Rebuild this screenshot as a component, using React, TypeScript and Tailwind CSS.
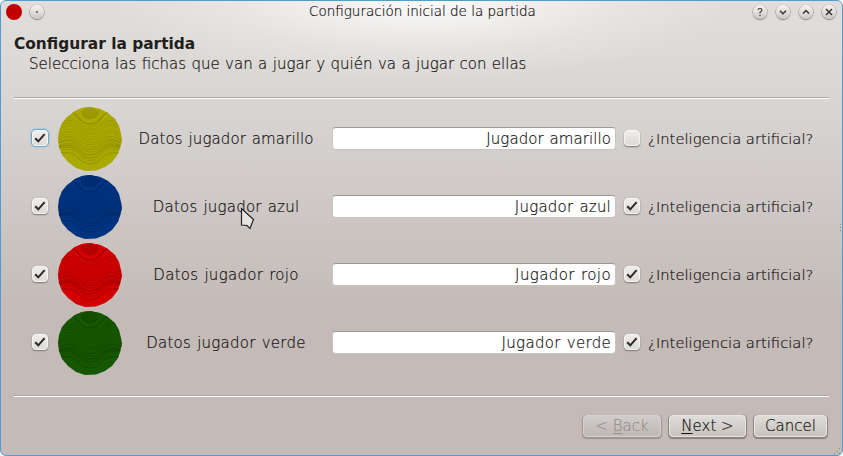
import type { ReactNode } from 'react';

type Player = {
  label: string;
  name: string;
  base: string;
  dark: string;
  ai: boolean;
  focused?: boolean;
  labelSpacing: string;
  nameSpacing: string;
};

const players: Player[] = [
  { label: 'Datos jugador amarillo', name: 'Jugador amarillo', base: '#aaa900', dark: '#858400', ai: false, focused: true, labelSpacing: 'tracking-[0.1px] [word-spacing:1px]', nameSpacing: 'tracking-[0.07px] [word-spacing:1px]' },
  { label: 'Datos jugador azul', name: 'Jugador azul', base: '#003480', dark: '#00245c', ai: true, labelSpacing: 'tracking-[0.22px] [word-spacing:1px]', nameSpacing: 'tracking-[0.22px] [word-spacing:1px]' },
  { label: 'Datos jugador rojo', name: 'Jugador rojo', base: '#d20000', dark: '#8c0000', ai: true, labelSpacing: 'tracking-[0.28px] [word-spacing:1px]', nameSpacing: 'tracking-[0.4px] [word-spacing:1px]' },
  { label: 'Datos jugador verde', name: 'Jugador verde', base: '#165800', dark: '#0e3e00', ai: true, labelSpacing: 'tracking-[0.26px] [word-spacing:1px]', nameSpacing: 'tracking-[0.3px] [word-spacing:1px]' },
];

// y: depth at the centre, rise: height of the side crests, edge: drop from the crest to the rim
const waves = [
  { y: 20, rise: 9, edge: 6, o: 0.3 }, { y: 22.5, rise: 9, edge: 6, o: 0.45 }, { y: 25, rise: 9, edge: 5, o: 0.3 },
  { y: 27.5, rise: 9, edge: 5, o: 0.4 }, { y: 30, rise: 8, edge: 5, o: 0.3 }, { y: 32.5, rise: 8, edge: 5, o: 0.4 },
  { y: 35, rise: 8, edge: 4, o: 0.35 }, { y: 37.5, rise: 8, edge: 4, o: 0.5 }, { y: 40, rise: 8, edge: 4, o: 0.4 },
  { y: 42.5, rise: 9, edge: 3, o: 0.65 }, { y: 45, rise: 9, edge: 3, o: 0.5 }, { y: 48, rise: 10, edge: 2, o: 0.9 },
  { y: 51, rise: 11, edge: 1, o: 0.75 }, { y: 53.5, rise: 11, edge: 0, o: 0.35 }, { y: 57, rise: 11, edge: 0, o: 0.65 },
];

function Ball({ base, dark, id }: { base: string; dark: string; id: string }) {
  return (
    <svg width="64" height="64" viewBox="0 0 64 64" className="block">
      <clipPath id={id}>
        <polygon points="32,0 42,2 50,6 57,12 61,19 63,27 64,33 62,41 60,47 54,55 47,60 38,63.5 27,64 18,61 10,55 4,48 1,40 0,32 1,24 4,16 9,10 17,4 24,1" />
      </clipPath>
      <g clipPath={`url(#${id})`}>
        <rect width="64" height="64" fill={base} />
        {waves.map(({ y, rise, edge, o }) => (
          <path
            key={y}
            d={`M-1 ${y - rise + edge} C3 ${y - rise + edge - 1} 6 ${y - rise} 11 ${y - rise} C19 ${y - rise} 22 ${y} 32 ${y} C42 ${y} 45 ${y - rise} 53 ${y - rise} C58 ${y - rise} 61 ${y - rise + edge - 1} 65 ${y - rise + edge}`}
            fill="none"
            stroke={dark}
            strokeOpacity={o}
            strokeWidth="1"
          />
        ))}
        <path d="M13 4 C21 8 22 17 32 17 C42 17 43 8 51 4 L51 0 L13 0Z" fill={base} />
        <path d="M14 5 C22 9 22 17 32 17 C42 17 42 9 50 5" fill="none" stroke={dark} strokeOpacity=".7" strokeWidth="1.3" />
        <ellipse cx="32" cy="6" rx="8" ry="5.5" fill={dark} fillOpacity=".4" />
        <path d="M23.5 3 C23 14.5 41 14.5 40.5 3" fill="none" stroke={dark} strokeOpacity=".5" />
      </g>
    </svg>
  );
}

function Check({ checked, focused }: { checked: boolean; focused?: boolean }) {
  return (
    <span
      className={`mb-[2px] block h-4 w-4 shrink-0 rounded-[4px] border border-[#f7f6f5] bg-linear-to-b from-[#efeeed] to-[#dddad7] ${
        focused ? 'shadow-[0_0_1.5px_1px_#4ba3d8]' : 'shadow-[0_1px_1.5px_0px_#77726f]'
      }`}
    >
      {checked && (
        <svg width="14" height="14" viewBox="0 0 14 14" className="block">
          <path d="M2.2 7.2 L5.3 10.3 L11.6 3.2" fill="none" stroke="#2b2927" strokeWidth="2" />
        </svg>
      )}
    </span>
  );
}

function TitleButton({ children }: { children: ReactNode }) {
  return (
    <span className="block h-[14px] w-[14px] rounded-full bg-linear-to-b from-[#f6f5f4] to-[#cbc7c3] shadow-[0_0.5px_1px_0.5px_#85817e]">
      <svg width="14" height="14" viewBox="0 0 14 14" className="block" fill="none" stroke="#353331" strokeWidth="1.5">
        {children}
      </svg>
    </span>
  );
}

function Separator() {
  return <div className="mx-[13px] h-[2px] shrink-0 border-t border-b border-t-[#aaa6a4] border-b-white" />;
}

function Button({ children, width, disabled }: { children: ReactNode; width: string; disabled?: boolean }) {
  return (
    <button
      className={`flex h-[22px] ${width} items-center justify-center rounded-[4px] border bg-linear-to-b whitespace-pre ${
        disabled
          ? 'border-[#d6d2cf] from-[#d1cdca] to-[#bfb8b4] text-[#96908d] shadow-[0_1px_1px_0.5px_#9c9592]'
          : 'border-[#e9e7e5] from-[#dfddda] to-[#c7c2bd] shadow-[0_1px_1px_0.5px_#88817e]'
      }`}
    >
      {children}
    </button>
  );
}

export default function App() {
  return (
    <div className="relative h-[456px] w-[843px] overflow-hidden bg-white font-['DejaVu_Sans_Light','DejaVu_Sans',sans-serif] text-[15px] font-extralight text-[#171412] [-webkit-text-stroke:0.2px]">
      <div className="flex h-[456px] flex-col rounded-[6px] border border-[#529bca] bg-[radial-gradient(ellipse_310px_80px_at_421px_0px,#ffffffe0,#ffffff90_30%,#ffffff38_65%,#ffffff00),linear-gradient(#e0dedc_0px,#d9d5d2_100px,#cdc8c5_210px,#c4bbb8_305px)]">
        <header className="flex h-[22px] shrink-0 items-center px-[5px] text-[13.5px]">
          <span className="h-4 w-4 rounded-full bg-[#c20000]" />
          <span className="mb-px ml-2">
            <TitleButton><circle cx="7" cy="7" r=".5" strokeWidth="1" /></TitleButton>
          </span>
          <h1 className="mb-[2px] ml-[265px] w-[240px] whitespace-nowrap">Configuración inicial de la partida</h1>
          <div className="mr-[1px] mb-px ml-auto flex gap-[9px]">
            <TitleButton><path strokeWidth="1.1" d="M5 5 Q5 3.5 7 3.5 Q9 3.5 9 5 Q9 6 7 7.2 V8.5 M7 9.7 V11" /></TitleButton>
            <TitleButton><path d="M4 5.8 L7 8.8 L10 5.8" /></TitleButton>
            <TitleButton><path d="M4 8.5 L7 5.5 L10 8.5" /></TitleButton>
            <TitleButton><path d="M4 4 L10 10 M10 4 L4 10" /></TitleButton>
          </div>
        </header>
        <div className="h-[74px] shrink-0 pt-[11px] pl-[13px] leading-5 whitespace-nowrap">
          <h2 className="font-['DejaVu_Sans',sans-serif] text-[15.4px] font-bold text-[#211e1c] [-webkit-text-stroke:0px]">Configurar la partida</h2>
          <p className="pl-[15px] [word-spacing:0.67px]">Selecciona las fichas que van a jugar y quién va a jugar con ellas</p>
        </div>
        <Separator />
        <main className="pt-[6px]">
          {players.map((p) => (
            <div key={p.name} className="flex h-[68px] items-center pl-[31px] leading-5 whitespace-nowrap">
              <Check checked focused={p.focused} />
              <div className="ml-[10px]"><Ball base={p.base} dark={p.dark} id={p.name.replace(' ', '-')} /></div>
              <div className={`mr-[2px] w-[208px] text-center ${p.labelSpacing}`}>{p.label}</div>
              <input
                className={`mb-px h-[23px] w-[284px] rounded-[4px] border border-[#c9c4c1] border-t-[#9b9794] bg-white px-1 pt-px text-right leading-5 ${p.nameSpacing}`}
                defaultValue={p.name}
              />
              <div className="ml-2"><Check checked={p.ai} /></div>
              <div className="ml-2 text-[14.75px]">¿Inteligencia artificial?</div>
            </div>
          ))}
        </main>
        <div className="h-[18px] shrink-0" />
        <Separator />
        <footer className="mt-[18px] flex justify-end gap-2 pr-[15px] [word-spacing:2px]">
          <Button width="w-[78px]" disabled>{'< '}<u className="underline-offset-2">B</u>ack</Button>
          <Button width="w-[77px]"><u className="underline-offset-2">N</u>{'ext >'}</Button>
          <Button width="w-[73px]">Cancel</Button>
        </footer>
      </div>
      <svg className="absolute top-[206px] left-[239px]" width="18" height="26" viewBox="0 0 18 26">
        <path d="M2.5 2.5 V19 L8 19.5 L11 22.5 L14.5 13.5Z" fill="#e6e4e2" stroke="#222" strokeWidth="1.2" />
      </svg>
      <svg className="absolute top-[224px] left-[839px]" width="3" height="9" fill="#888">
        <rect y="0" x="1" width="1" height="1" /><rect y="3" x="1" width="1" height="1" /><rect y="6" x="1" width="1" height="1" />
      </svg>
      <svg className="absolute top-[448px] left-[834px]" width="7" height="7" fill="#888">
        <rect x="5" y="0" width="1" height="1" /><rect x="3" y="3" width="1" height="1" /><rect x="0" y="5" width="1" height="1" /><rect x="5" y="5" width="1" height="1" />
      </svg>
    </div>
  );
}
